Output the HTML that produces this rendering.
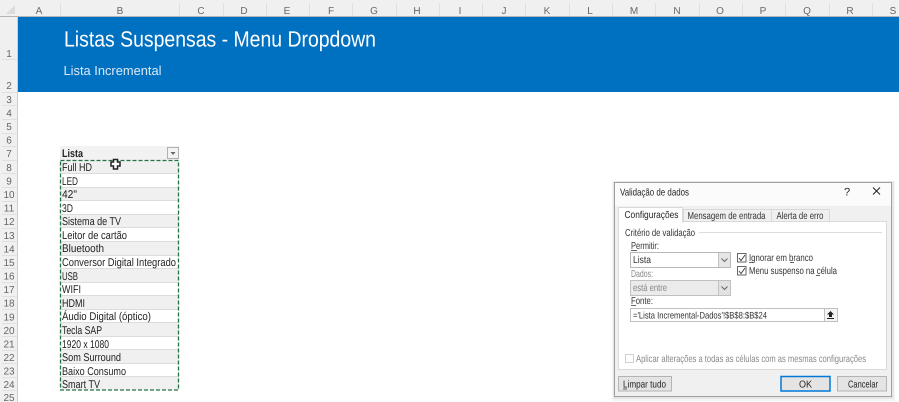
<!DOCTYPE html>
<html><head><meta charset="utf-8">
<style>
html,body{margin:0;padding:0;background:#fff;width:899px;height:402px;overflow:hidden}
svg{display:block;filter:blur(.35px)}
text{font-family:"Liberation Sans",sans-serif;text-rendering:geometricPrecision}
</style></head>
<body>
<svg width="899" height="402" viewBox="0 0 899 402" xmlns="http://www.w3.org/2000/svg">
<rect width="899" height="402" fill="#fff"/>
<rect width="899" height="17" fill="#f0f0f0"/>
<rect y="0" width="18" height="402" fill="#f0f0f0"/>
<rect y="16" x="0" width="899" height="1" fill="#b5b5b5"/>
<rect x="17" y="17" width="1" height="385" fill="#d0d0d0"/>
<polygon points="15,5 15,14 6,14" fill="#dcdcdc"/>
<g stroke="#e0e0e0" stroke-width="1">
<path d="M60.500 3V16M179.500 3V16M223.500 3V16M266.500 3V16M309.500 3V16M352.500 3V16M396.500 3V16M439.500 3V16M482.500 3V16M525.500 3V16M569.500 3V16M612.500 3V16M655.500 3V16M699.500 3V16M742.500 3V16M785.500 3V16M829.500 3V16M872.500 3V16"/>
<path d="M2 59.500H17M2 92.500H17M2 105.500H17M2 119.500H17M2 133.500H17M2 146.500H17M2 160.500H17M2 173.500H17M2 187.500H17M2 201.500H17M2 214.500H17M2 228.500H17M2 241.500H17M2 255.500H17M2 268.500H17M2 282.500H17M2 296.500H17M2 309.500H17M2 323.500H17M2 336.500H17M2 350.500H17M2 363.500H17M2 377.500H17M2 390.500H17"/>
</g>
<g font-size="10" fill="#666" text-anchor="middle">
<text x="39" y="14">A</text><text x="120" y="14">B</text><text x="201" y="14">C</text><text x="244" y="14">D</text><text x="287" y="14">E</text><text x="331" y="14">F</text><text x="374" y="14">G</text><text x="417" y="14">H</text><text x="460" y="14">I</text><text x="504" y="14">J</text><text x="547" y="14">K</text><text x="590" y="14">L</text><text x="634" y="14">M</text><text x="677" y="14">N</text><text x="720" y="14">O</text><text x="763" y="14">P</text><text x="807" y="14">Q</text><text x="850" y="14">R</text><text x="893" y="14">S</text>
<text x="9" y="57">1</text><text x="9" y="89">2</text><text x="9" y="103">3</text><text x="9" y="116.500">4</text><text x="9" y="130">5</text><text x="9" y="143.500">6</text><text x="9" y="157">7</text><text x="9" y="171">8</text><text x="9" y="184.500">9</text><text x="9" y="198">10</text><text x="9" y="211.500">11</text><text x="9" y="225">12</text><text x="9" y="239">13</text><text x="9" y="252.500">14</text><text x="9" y="266">15</text><text x="9" y="279.500">16</text><text x="9" y="293">17</text><text x="9" y="306.500">18</text><text x="9" y="320.500">19</text><text x="9" y="334">20</text><text x="9" y="347.500">21</text><text x="9" y="361">22</text><text x="9" y="374.500">23</text><text x="9" y="388">24</text><text x="9" y="401">25</text>
</g>
<rect x="18" y="17" width="881" height="75" fill="#0070c0"/>
<text x="64" y="46.500" font-size="22" fill="#fff" textLength="312" lengthAdjust="spacingAndGlyphs">Listas Suspensas - Menu Dropdown</text>
<text x="63.500" y="75" font-size="13" fill="#dbe9f6" textLength="98" lengthAdjust="spacingAndGlyphs">Lista Incremental</text>
<rect x="60" y="146" width="119" height="14" fill="#f2f2f2"/>
<g fill="#f0f0f0">
<rect x="60" y="160" width="119" height="14"/><rect x="60" y="187" width="119" height="14"/><rect x="60" y="214" width="119" height="14"/><rect x="60" y="241" width="119" height="14"/><rect x="60" y="268" width="119" height="14"/><rect x="60" y="296" width="119" height="14"/><rect x="60" y="323" width="119" height="13"/><rect x="60" y="350" width="119" height="13"/><rect x="60" y="377" width="119" height="13"/>
</g>
<g stroke="#dcdcdc"><path d="M60 173.500H179M60 187.500H179M60 200.500H179M60 214.500H179M60 227.500H179M60 241.500H179M60 255.500H179M60 268.500H179M60 282.500H179M60 295.500H179M60 309.500H179M60 322.500H179M60 336.500H179M60 349.500H179M60 363.500H179M60 376.500H179"/></g>
<text x="62" y="157" font-size="11" font-weight="bold" fill="#222" textLength="21" lengthAdjust="spacingAndGlyphs">Lista</text>
<rect x="167.500" y="147.500" width="11" height="11" fill="#f3f3f3" stroke="#b0b0b0"/>
<polygon points="170.500,152 175.500,152 173,155" fill="#666"/>
<g font-size="11.200" fill="#222">
<text x="62" y="171" textLength="30" lengthAdjust="spacingAndGlyphs">Full HD</text>
<text x="62" y="185" textLength="16" lengthAdjust="spacingAndGlyphs">LED</text>
<text x="62" y="198" textLength="15" lengthAdjust="spacingAndGlyphs">42"</text>
<text x="62" y="212" textLength="11" lengthAdjust="spacingAndGlyphs">3D</text>
<text x="62" y="225" textLength="59" lengthAdjust="spacingAndGlyphs">Sistema de TV</text>
<text x="62" y="239" textLength="65" lengthAdjust="spacingAndGlyphs">Leitor de cartão</text>
<text x="62" y="252" textLength="42" lengthAdjust="spacingAndGlyphs">Bluetooth</text>
<text x="62" y="266" textLength="114" lengthAdjust="spacingAndGlyphs">Conversor Digital Integrado</text>
<text x="62" y="280" textLength="16" lengthAdjust="spacingAndGlyphs">USB</text>
<text x="62" y="293" textLength="19" lengthAdjust="spacingAndGlyphs">WIFI</text>
<text x="62" y="307" textLength="23" lengthAdjust="spacingAndGlyphs">HDMI</text>
<text x="62" y="320" textLength="89" lengthAdjust="spacingAndGlyphs">Áudio Digital (óptico)</text>
<text x="62" y="334" textLength="40" lengthAdjust="spacingAndGlyphs">Tecla SAP</text>
<text x="62" y="348" textLength="47" lengthAdjust="spacingAndGlyphs">1920 x 1080</text>
<text x="62" y="361" textLength="59" lengthAdjust="spacingAndGlyphs">Som Surround</text>
<text x="62" y="375" textLength="64" lengthAdjust="spacingAndGlyphs">Baixo Consumo</text>
<text x="62" y="388" textLength="38" lengthAdjust="spacingAndGlyphs">Smart TV</text>
</g>
<rect x="60.500" y="160.500" width="118" height="229.500" fill="none" stroke="#217346" stroke-width="1.300" stroke-dasharray="4 2"/>
<path d="M113.500 159.500H117.500V162H120V166H117.500V169H113.500V166H111V162H113.500Z" fill="#fff" stroke="#222" stroke-width="1.500"/>
<rect x="612" y="181" width="283" height="220" fill="#000" opacity=".04"/>
<rect x="613" y="181" width="281" height="218" fill="#000" opacity=".06"/>
<rect x="614.500" y="182.500" width="277" height="214" fill="#f0f0f0" stroke="#a0a0a0" stroke-width="1"/>
<rect x="615" y="183" width="276" height="23" fill="#fbfbfb"/>
<text x="620" y="195.500" font-size="10" fill="#222" textLength="69" lengthAdjust="spacingAndGlyphs">Validação de dados</text>
<text x="844" y="195.500" font-size="11" fill="#222">?</text>
<path d="M873 187.500L880 194.500M880 187.500L873 194.500" stroke="#222" stroke-width="1" fill="none"/>
<rect x="618.500" y="221.500" width="268" height="148" fill="#fff" stroke="#dadada"/>
<rect x="683.500" y="209.500" width="88" height="12" fill="#f0f0f0" stroke="#d9d9d9"/>
<rect x="771.500" y="209.500" width="58" height="12" fill="#f0f0f0" stroke="#d9d9d9"/>
<rect x="618.500" y="207.500" width="64" height="15" fill="#fff" stroke="#d9d9d9"/>
<rect x="619" y="220" width="63" height="3" fill="#fff"/>
<g font-size="10" fill="#333">
<text x="624.500" y="218" textLength="54" lengthAdjust="spacingAndGlyphs" fill="#222">Configurações</text>
<text x="687.500" y="219" textLength="78" lengthAdjust="spacingAndGlyphs">Mensagem de entrada</text>
<text x="776.500" y="219" textLength="47" lengthAdjust="spacingAndGlyphs">Alerta de erro</text>
<text x="625" y="236" textLength="70" lengthAdjust="spacingAndGlyphs">Critério de validação</text>
<text x="631" y="249" textLength="28" lengthAdjust="spacingAndGlyphs">Permitir:</text>
<text x="631" y="277" textLength="22" lengthAdjust="spacingAndGlyphs" fill="#8a8a8a">Dados:</text>
<text x="631" y="304" textLength="22" lengthAdjust="spacingAndGlyphs">Fonte:</text>
<text x="749" y="261" textLength="64" lengthAdjust="spacingAndGlyphs">Ignorar em branco</text>
<text x="749" y="274" textLength="88" lengthAdjust="spacingAndGlyphs">Menu suspenso na célula</text>
</g>
<path d="M699 232.500H882" stroke="#dcdcdc"/>
<path d="M631 250.500H637M631 305.500H636M749 262.500H753M790 262.500H794M816 275.500H820" stroke="#333" stroke-width=".7"/>
<rect x="630.500" y="252.500" width="100" height="15" fill="#fff" stroke="#b8b8b8"/>
<rect x="718" y="253" width="12" height="14" fill="#e6e6e6"/>
<path d="M718.500 253V267" stroke="#c0c0c0"/>
<text x="633" y="263" font-size="10" fill="#333" textLength="18" lengthAdjust="spacingAndGlyphs">Lista</text>
<path d="M721.500 258.500L724.500 261.500L727.500 258.500" stroke="#666" fill="none"/>
<rect x="630.500" y="280.500" width="100" height="15" fill="#ebebeb" stroke="#c0c0c0"/>
<rect x="718" y="281" width="12" height="14" fill="#e2e2e2"/>
<path d="M718.500 281V295" stroke="#c0c0c0"/>
<text x="633" y="291" font-size="10" fill="#888" textLength="34" lengthAdjust="spacingAndGlyphs">está entre</text>
<path d="M721.500 286.500L724.500 289.500L727.500 286.500" stroke="#666" fill="none"/>
<rect x="737.500" y="253.500" width="8.500" height="8.500" fill="#fff" stroke="#666"/>
<path d="M739 258L741 260.500L745 255" stroke="#444" fill="none"/>
<rect x="737.500" y="266.500" width="8.500" height="8.500" fill="#fff" stroke="#666"/>
<path d="M739 271L741 273.500L745 268" stroke="#444" fill="none"/>
<rect x="630.500" y="308.500" width="207" height="13" fill="#fff" stroke="#c0c0c0"/>
<rect x="824" y="309" width="13" height="12" fill="#f4f4f4"/>
<path d="M824.500 309V321" stroke="#c0c0c0"/>
<path d="M830.500 311L834 314.500H832V317H829V314.500H827Z" fill="#222"/>
<path d="M827 318.500H834" stroke="#222"/>
<text x="633" y="318.500" font-size="9.500" fill="#333" textLength="134" lengthAdjust="spacingAndGlyphs">='Lista Incremental-Dados'!$B$8:$B$24</text>
<rect x="625.500" y="354.500" width="8" height="8" fill="#fff" stroke="#d0d0d0"/>
<text x="636" y="362" font-size="10" fill="#8a8a8a" textLength="230" lengthAdjust="spacingAndGlyphs">Aplicar alterações a todas as células com as mesmas configurações</text>
<rect x="618.500" y="376.500" width="53" height="14.500" fill="#e4e4e4" stroke="#b4b4b4"/>
<text x="623" y="387.500" font-size="10" fill="#222" textLength="43" lengthAdjust="spacingAndGlyphs">Limpar tudo</text>
<path d="M623 389H627" stroke="#222" stroke-width=".7"/>
<rect x="781" y="376.500" width="49" height="14.500" fill="#e4e4e4" stroke="#0078d7" stroke-width="1.500"/>
<text x="799" y="387.500" font-size="10" fill="#222" textLength="13" lengthAdjust="spacingAndGlyphs">OK</text>
<rect x="837.500" y="376.500" width="49" height="14.500" fill="#e4e4e4" stroke="#b4b4b4"/>
<text x="848" y="387.500" font-size="10" fill="#222" textLength="30" lengthAdjust="spacingAndGlyphs">Cancelar</text>
</svg>
</body></html>
